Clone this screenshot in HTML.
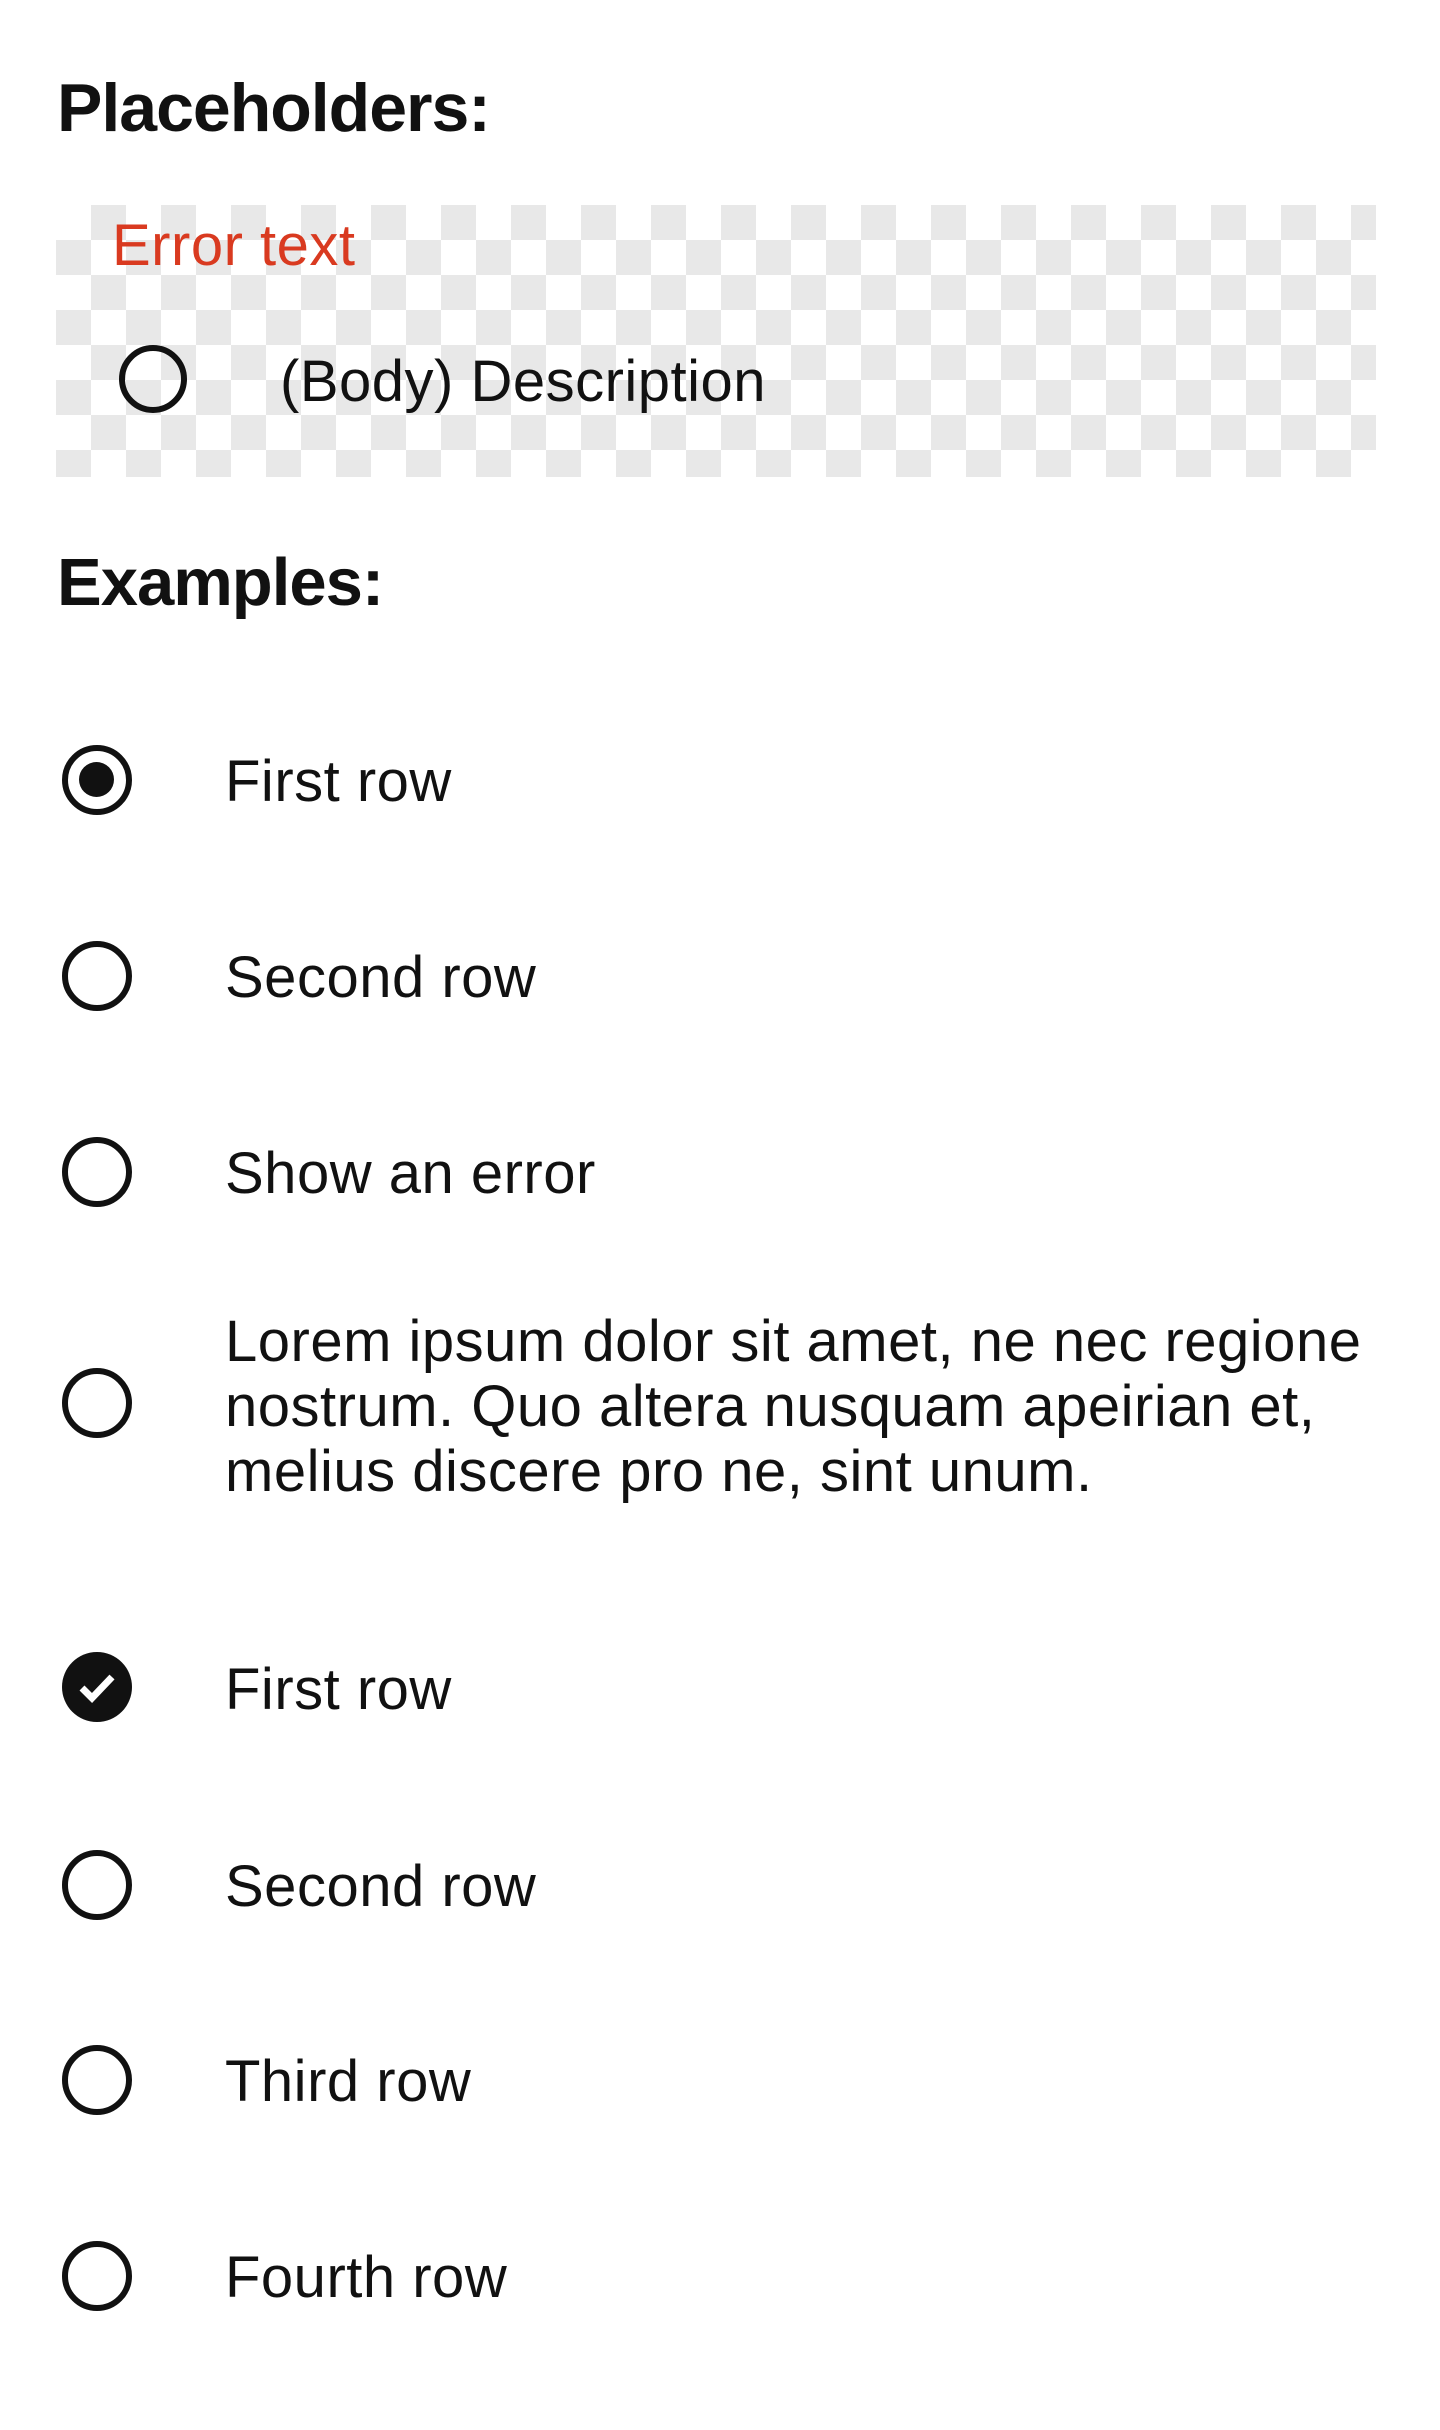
<!DOCTYPE html>
<html><head><meta charset="utf-8"><style>
body{margin:0;width:1440px;height:2430px;background:#fff;position:relative;font-family:"Liberation Sans",sans-serif;color:#111;overflow:hidden}
.t{position:absolute;line-height:1;white-space:nowrap;font-size:58px;letter-spacing:0.5px}
.h{position:absolute;line-height:1;font-weight:bold;white-space:nowrap;letter-spacing:-1px}
.r{position:absolute;width:70px;height:70px;border:6.5px solid #111;border-radius:50%;box-sizing:border-box}
.box{position:absolute;left:56px;top:205px;width:1320px;height:272px;
background-color:#fff;background-image:conic-gradient(#e8e8e8 25%,#fff 0 50%,#e8e8e8 0 75%,#fff 0);background-size:70px 70px;background-position:0 0}
</style></head><body>
<div class="h" style="font-size:68px;left:57px;top:74px">Placeholders:</div>
<div class="box"></div>
<div class="t" style="left:112px;top:217px;color:#d93a20">Error text</div>
<div class="r" style="left:119px;top:345px;width:68px;height:68px"></div>
<div class="t" style="left:280px;top:353px">(Body) Description</div>
<div class="h" style="font-size:67px;left:57px;top:549px">Examples:</div>

<div class="r" style="left:62px;top:745px"><div style="position:absolute;left:11px;top:11px;width:35px;height:35px;border-radius:50%;background:#111"></div></div>
<div class="t" style="left:225px;top:753px">First row</div>

<div class="r" style="left:62px;top:941px"></div>
<div class="t" style="left:225px;top:949px">Second row</div>

<div class="r" style="left:62px;top:1137px"></div>
<div class="t" style="left:225px;top:1145px">Show an error</div>

<div class="r" style="left:62px;top:1368px"></div>
<div class="t" style="left:225px;top:1309px;line-height:65px">Lorem ipsum dolor sit amet, ne nec regione<br>nostrum. Quo altera nusquam apeirian et,<br>melius discere pro ne, sint unum.</div>

<svg style="position:absolute;left:62px;top:1652px" width="70" height="70" viewBox="0 0 70 70"><circle cx="35" cy="35" r="35" fill="#111"/><path d="M20 36 L30 46 L50 25" stroke="#fff" stroke-width="7" fill="none"/></svg>
<div class="t" style="left:225px;top:1661px">First row</div>

<div class="r" style="left:62px;top:1850px"></div>
<div class="t" style="left:225px;top:1858px">Second row</div>

<div class="r" style="left:62px;top:2045px"></div>
<div class="t" style="left:225px;top:2053px">Third row</div>

<div class="r" style="left:62px;top:2241px"></div>
<div class="t" style="left:225px;top:2249px">Fourth row</div>
</body></html>
